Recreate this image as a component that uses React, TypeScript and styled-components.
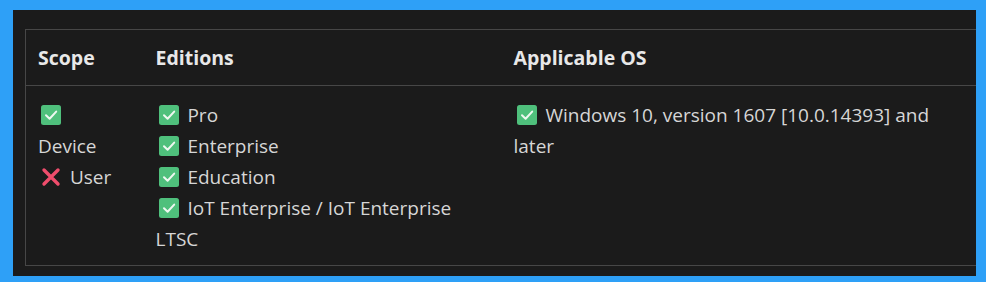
import React from 'react'
import styled, { createGlobalStyle } from 'styled-components'

const GlobalStyle = createGlobalStyle`
  html, body {
    margin: 0;
    padding: 0;
    background: #2ea0f7;
  }
  body {
    font-family: 'Open Sans', 'Noto Sans', sans-serif;
  }
`

type Mark = 'yes' | 'no'

const editions = [
  'Pro',
  'Enterprise',
  'Education',
  'IoT Enterprise / IoT Enterprise LTSC',
]

const osText = 'Windows 10, version 1607 [10.0.14393] and later'

const CheckIcon = () => (
  <IconBox viewBox="0 0 20 20">
    <rect x="0" y="0" width="20" height="20" rx="2.5" fill="#4fc07c" />
    <path
      d="M5 10.3 L8.6 13.8 L15.2 6.6"
      fill="none"
      stroke="#eef8f1"
      strokeWidth="2"
      strokeLinecap="round"
      strokeLinejoin="round"
    />
  </IconBox>
)

const CrossIcon = () => (
  <IconBox viewBox="0 0 20 20">
    <path
      d="M3 3 L17 17 M17 3 L3 17"
      fill="none"
      stroke="#ef4d6c"
      strokeWidth="3.4"
      strokeLinecap="round"
    />
  </IconBox>
)

const Icon = ({ mark }: { mark: Mark }) =>
  mark === 'yes' ? <CheckIcon /> : <CrossIcon />

export default function App() {
  return (
    <>
      <GlobalStyle />
      <Frame>
        <Panel>
          <Table>
            <colgroup>
              <col style={{ width: 118 }} />
              <col style={{ width: 358 }} />
              <col style={{ width: 490 }} />
            </colgroup>
            <thead>
              <tr>
                <Th>Scope</Th>
                <Th>Editions</Th>
                <Th>Applicable OS</Th>
              </tr>
            </thead>
            <tbody>
              <tr>
                <Td>
                  <Line>
                    <Icon mark="yes" />
                  </Line>
                  <Line>Device</Line>
                  <Line>
                    <Icon mark="no" /> User
                  </Line>
                </Td>
                <Td>
                  {editions.map((e) => (
                    <Line key={e}>
                      <Icon mark="yes" /> {e}
                    </Line>
                  ))}
                </Td>
                <Td $padRight={40}>
                  <Line>
                    <Icon mark="yes" /> {osText}
                  </Line>
                </Td>
              </tr>
            </tbody>
          </Table>
        </Panel>
      </Frame>
    </>
  )
}

const Frame = styled.div`
  width: 986px;
  height: 282px;
  padding: 10px 10px 6px 13px;
  box-sizing: border-box;
`

const Panel = styled.div`
  background: #1b1b1b;
  height: 100%;
  padding: 19px 0 0 12px;
  box-sizing: border-box;
  overflow: hidden;
`

const Table = styled.table`
  border-collapse: collapse;
  table-layout: fixed;
  width: 966px;
  border: 1px solid #474747;
  color: #d6d6d6;
`

const Th = styled.th`
  text-align: left;
  font-weight: 700;
  font-size: 19.5px;
  color: #e8e8e8;
  height: 55px;
  padding: 0 12px;
  border-bottom: 1px solid #474747;
`

const Td = styled.td<{ $padRight?: number }>`
  vertical-align: top;
  padding: 14px ${(p) => p.$padRight ?? 12}px 10px 12px;
  font-size: 19px;
  line-height: 31px;
`

const Line = styled.div``

const IconBox = styled.svg`
  width: 20px;
  height: 20px;
  vertical-align: -3px;
  margin: 0 4px 0 3px;
`
